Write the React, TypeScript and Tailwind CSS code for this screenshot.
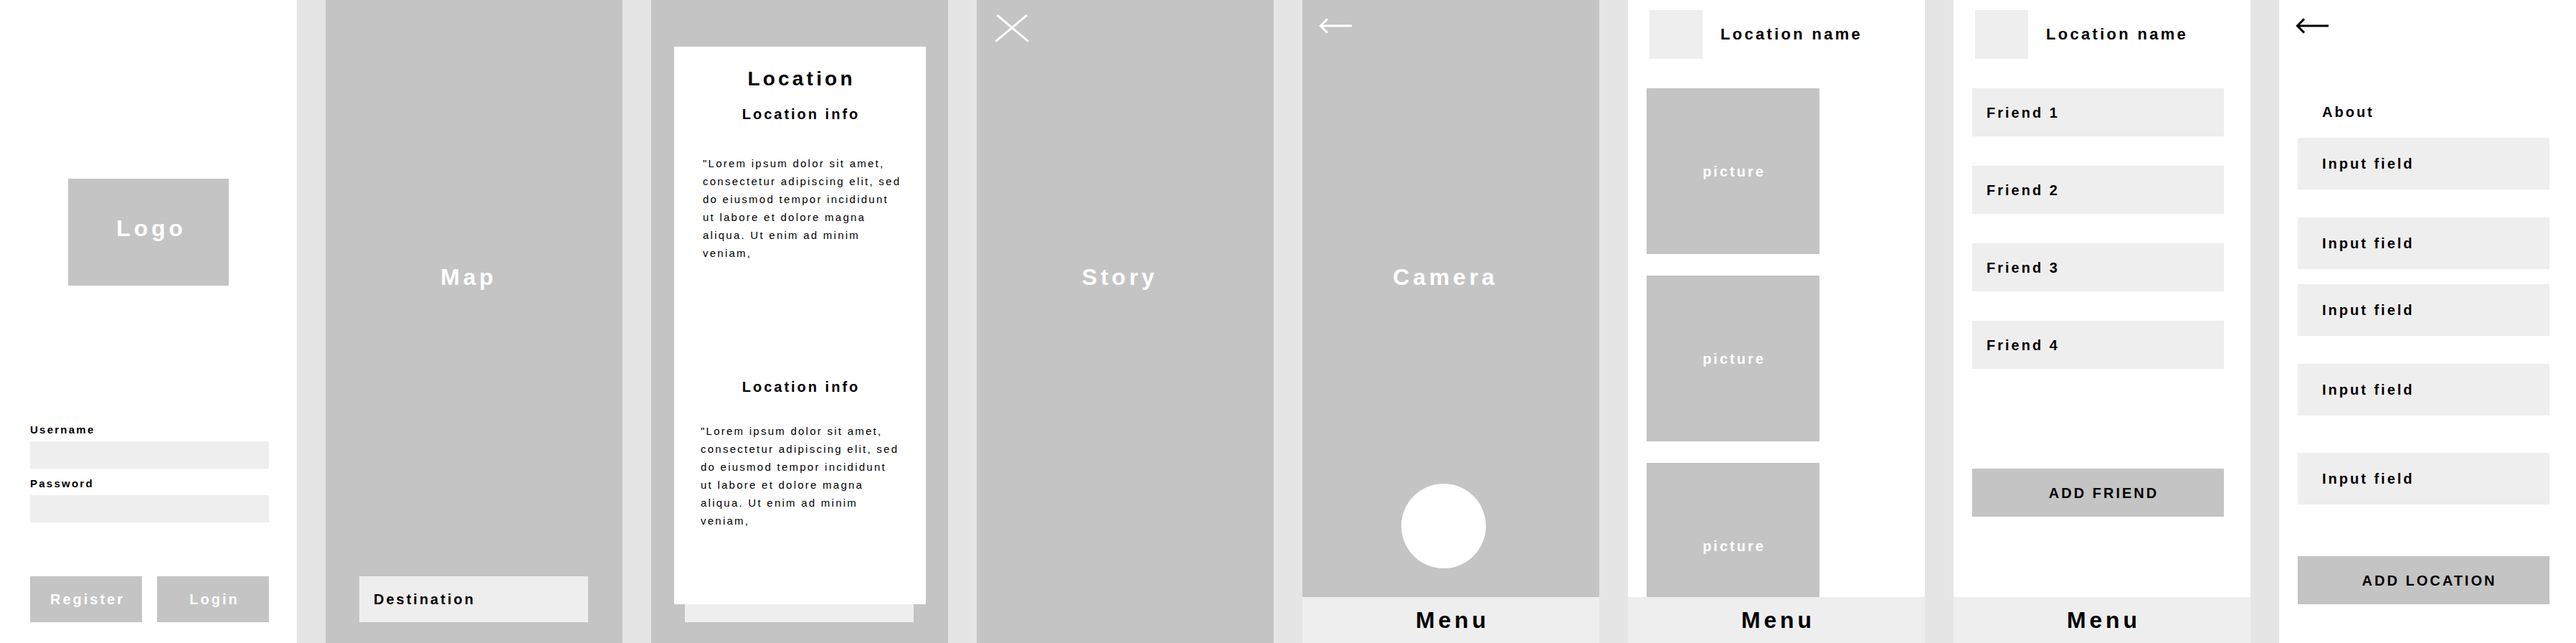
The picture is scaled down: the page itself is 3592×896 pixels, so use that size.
import type { ReactNode } from "react";

const LOREM =
  '"Lorem ipsum dolor sit amet, consectetur adipiscing elit, sed do eiusmod tempor incididunt ut labore et dolore magna aliqua. Ut enim ad minim veniam,';

const DISPLAY = "text-[32px] leading-10 font-bold tracking-[0.15em]";
const LABEL = "text-xl leading-6 font-bold tracking-[0.15em]";
const BODY = "text-[15px] leading-[25px] tracking-[0.15em]";

function Screen({ name, className, children }: { name: string; className: string; children: ReactNode }) {
  return (
    <section aria-label={name} className={`relative flex h-full min-w-[375px] flex-1 flex-col overflow-hidden ${className}`}>
      {children}
    </section>
  );
}

function BackButton() {
  return (
    <button type="button" aria-label="Back" className="mt-[25px] ml-[23px] block">
      <svg width="46" height="22" viewBox="0 0 46 22" fill="none" stroke="currentColor" strokeWidth="3" aria-hidden="true">
        <path d="M46 11H2.5" />
        <path d="M12 1.4L2.4 11L12 20.6" />
      </svg>
    </button>
  );
}

function CloseButton() {
  return (
    <button type="button" aria-label="Close" className="mt-5 ml-[25px] block">
      <svg width="48" height="39" viewBox="0 0 48 39" fill="none" stroke="currentColor" strokeWidth="3" aria-hidden="true">
        <path d="M3.4 1.2L46.8 37.6" />
        <path d="M45 1.2L1.4 37.6" />
      </svg>
    </button>
  );
}

/* Full-bleed placeholder: a top area for the navigation icon, then the caption. */
function Stage({ title, action }: { title: string; action?: ReactNode }) {
  return (
    <>
      <div className="h-[366px] shrink-0">{action}</div>
      <h2 className={`${DISPLAY} pr-5 pl-[0.15em] text-center`}>{title}</h2>
    </>
  );
}

function DestinationField() {
  return (
    <div className="mt-auto pr-12 pb-[29px] pl-[47px]">
      <input
        aria-label="Destination"
        placeholder="Destination"
        className={`${LABEL} block h-16 w-full bg-[#eeeeee] px-5 text-black outline-none placeholder:text-black placeholder:opacity-100`}
      />
    </div>
  );
}

function Field({ id, label, type }: { id: string; label: string; type: string }) {
  return (
    <div className="flex flex-col gap-1.5">
      <label htmlFor={id} className="text-[15px] leading-5 font-bold tracking-[0.15em]">
        {label}
      </label>
      <input id={id} type={type} className="h-[38px] w-full bg-[#eeeeee] px-3 outline-none" />
    </div>
  );
}

function MenuBar() {
  return (
    <nav className="mt-auto shrink-0">
      <button type="button" className={`${DISPLAY} block h-16 w-full bg-[#eeeeee] pl-[0.15em] text-center`}>
        Menu
      </button>
    </nav>
  );
}

function LocationHeader() {
  return (
    <header className="flex shrink-0 items-center gap-[25px] pt-3.5 pl-[30px]">
      <div className="h-[68px] w-[74px] bg-[#eeeeee]" />
      <h2 className="text-[22px] leading-7 font-bold tracking-[0.15em]">Location name</h2>
    </header>
  );
}

function WideButton({ children }: { children: ReactNode }) {
  return (
    <button type="button" className={`${LABEL} block h-[67px] w-full bg-[#c4c4c4] pl-4 text-center`}>
      {children}
    </button>
  );
}

const pictures = [1, 2, 3];
const friends = ["Friend 1", "Friend 2", "Friend 3", "Friend 4"];
const fieldGroups = [
  { id: 1, spacing: "mt-0" },
  { id: 2, spacing: "mt-[39px]" },
  { id: 3, spacing: "mt-[21px]" },
  { id: 4, spacing: "mt-[39px]" },
  { id: 5, spacing: "mt-[52px]" },
];

export default function App() {
  return (
    <main className="flex h-screen gap-10 overflow-x-auto bg-[#e5e5e5] font-['Liberation_Sans',Arial,sans-serif] text-black">
      <Screen name="Login" className="bg-white">
        <div className="mx-auto mt-[249px] flex h-[149px] w-56 shrink-0 items-center justify-center bg-[#c4c4c4] pb-3 pl-2">
          <h1 className={`${DISPLAY} text-white`}>Logo</h1>
        </div>
        <form className="mt-auto pr-[39px] pb-[29px] pl-[42px]" onSubmit={(e) => e.preventDefault()}>
          <div className="flex flex-col gap-[11px]">
            <Field id="username" label="Username" type="text" />
            <Field id="password" label="Password" type="password" />
          </div>
          <div className="mt-[75px] grid grid-cols-2 gap-[21px]">
            <button type="button" className={`${LABEL} h-16 bg-[#c4c4c4] pl-1 text-center text-white`}>
              Register
            </button>
            <button type="submit" className={`${LABEL} h-16 bg-[#c4c4c4] pl-1 text-center text-white`}>
              Login
            </button>
          </div>
        </form>
      </Screen>

      <Screen name="Map" className="bg-[#c4c4c4] text-white">
        <Stage title="Map" />
        <DestinationField />
      </Screen>

      <Screen name="Location details" className="bg-[#c4c4c4]">
        <DestinationField />
        <article role="dialog" aria-label="Location" className="absolute top-[65px] right-[31px] bottom-[54px] left-8 overflow-hidden bg-white pt-[29px]">
          <h2 className="pl-[0.15em] text-center text-[28px] leading-8 font-bold tracking-[0.15em]">Location</h2>
          <h3 className={`${LABEL} mt-[21px] pl-[0.15em] text-center`}>Location info</h3>
          <p className={`${BODY} mt-11 pr-[31px] pl-10`}>{LOREM}</p>
          <h3 className={`${LABEL} mt-[162px] pl-[0.15em] text-center`}>Location info</h3>
          <p className={`${BODY} mt-[37px] pr-[34px] pl-[37px]`}>{LOREM}</p>
        </article>
      </Screen>

      <Screen name="Story" className="bg-[#c4c4c4] text-white">
        <Stage title="Story" action={<CloseButton />} />
      </Screen>

      <Screen name="Camera" className="bg-[#c4c4c4]">
        <div className="flex flex-1 flex-col text-white">
          <Stage title="Camera" action={<BackButton />} />
          <div className="mt-auto flex justify-center pr-5 pb-10">
            <button type="button" aria-label="Take picture" className="size-[118px] rounded-full bg-white" />
          </div>
        </div>
        <MenuBar />
      </Screen>

      <Screen name="Location pictures" className="bg-white">
        <LocationHeader />
        <div className="mt-[41px] flex min-h-0 flex-1 flex-col gap-[30px] overflow-hidden pl-[26px]">
          {pictures.map((n) => (
            <figure key={n} className="flex h-[231px] w-[241px] shrink-0 items-center justify-center bg-[#c4c4c4]">
              <figcaption className={`${LABEL} pl-[0.15em] text-white`}>picture</figcaption>
            </figure>
          ))}
        </div>
        <MenuBar />
      </Screen>

      <Screen name="Location friends" className="bg-white">
        <LocationHeader />
        <div className="mt-[41px] pr-[37px] pl-[26px]">
          <ul className="flex flex-col gap-[41px]">
            {friends.map((friend) => (
              <li key={friend} className={`${LABEL} flex h-[67px] items-center bg-[#eeeeee] pl-5`}>
                {friend}
              </li>
            ))}
          </ul>
          <div className="mt-[139px]">
            <WideButton>ADD FRIEND</WideButton>
          </div>
        </div>
        <MenuBar />
      </Screen>

      <Screen name="Add location" className="bg-white">
        <div>
          <BackButton />
        </div>
        <form className="mt-[97px] pr-[37px] pl-[26px]" onSubmit={(e) => e.preventDefault()}>
          <h2 className={`${LABEL} mb-6 pl-[34px]`}>About</h2>
          {fieldGroups.map(({ id, spacing }) => (
            <input
              key={id}
              aria-label={`Input field ${id}`}
              placeholder="Input field"
              className={`${LABEL} ${spacing} block h-[72px] w-full bg-[#eeeeee] px-[34px] outline-none placeholder:text-black placeholder:opacity-100`}
            />
          ))}
          <div className="mt-[72px]">
            <WideButton>ADD LOCATION</WideButton>
          </div>
        </form>
      </Screen>
    </main>
  );
}
